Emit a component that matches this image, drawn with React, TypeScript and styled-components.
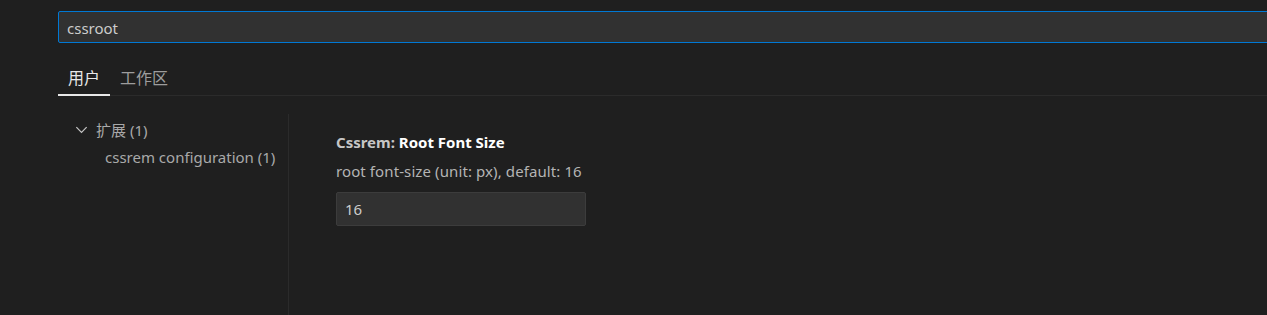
import React from "react";
import styled, { createGlobalStyle } from "styled-components";

const Global = createGlobalStyle`
  html, body { margin: 0; padding: 0; background: #1f1f1f; overflow: hidden; }
  body { font-family: "Noto Sans", "Open Sans", "Noto Sans CJK SC", sans-serif; }
`;

const Page = styled.div`
  width: 1267px;
  height: 315px;
  background: #1f1f1f;
  display: flex;
  flex-direction: column;
  padding-left: 58px;
  box-sizing: border-box;
  overflow: hidden;
`;

const SearchBox = styled.div`
  margin-top: 11px;
  height: 32px;
  width: 1230px;
  box-sizing: border-box;
  border: 1px solid #0078d4;
  border-radius: 2px;
  background: #313131;
  display: flex;
  align-items: center;
  padding: 1px 0 0 8px;
  color: #cccccc;
  font-size: 15px;
`;

const Tabs = styled.div`
  margin-top: 18px;
  display: flex;
  border-bottom: 1px solid #2b2b2b;
`;

const Tab = styled.div<{ $active?: boolean }>`
  padding: 0 10px 2px;
  height: 31px;
  display: flex;
  align-items: center;
  font-size: 16px;
  font-family: "Noto Sans CJK SC", sans-serif;
  color: ${(p) => (p.$active ? "#e7e7e7" : "#9d9d9d")};
  border-bottom: 2px solid ${(p) => (p.$active ? "#e7e7e7" : "transparent")};
  margin-bottom: -1px;
`;

const Body = styled.div`
  display: flex;
  flex: 1;
  margin-top: 18px;
`;

const Toc = styled.div`
  width: 230px;
  border-right: 1px solid #2b2b2b;
  display: flex;
  flex-direction: column;
  padding-top: 1px;
`;

const TocRow = styled.div<{ $indent: number }>`
  height: 28px;
  display: flex;
  align-items: center;
  padding-left: ${(p) => p.$indent}px;
  font-size: 15px;
  color: #a9a9a9;
  gap: 7px;
  white-space: nowrap;
`;

const Cjk = styled.span`
  font-family: "Noto Sans CJK SC", sans-serif;
`;

const Setting = styled.div`
  padding-left: 47px;
  padding-top: 17px;
  display: flex;
  flex-direction: column;
`;

const Title = styled.div`
  font-size: 15px;
  font-weight: 700;
  color: #c6c6c6;
  height: 22px;
  line-height: 22px;
`;

const TitleStrong = styled.span`
  color: #ffffff;
`;

const Desc = styled.div`
  margin-top: 8px;
  font-size: 15px;
  color: #b4b4b4;
  line-height: 20px;
  letter-spacing: 0.1px;
`;

const Input = styled.div`
  margin-top: 11px;
  width: 250px;
  height: 34px;
  box-sizing: border-box;
  border: 1px solid #3c3c3c;
  border-radius: 2px;
  background: #313131;
  display: flex;
  align-items: center;
  padding-left: 8px;
  font-size: 15px;
  color: #cccccc;
`;

const Chevron = () => (
  <svg width="15" height="15" viewBox="0 0 16 16" fill="none">
    <path d="M2.5 5.5 L8 11 L13.5 5.5" stroke="#c5c5c5" strokeWidth="1.3" />
  </svg>
);

export default function App() {
  return (
    <>
      <Global />
      <Page>
        <SearchBox>cssroot</SearchBox>
        <Tabs>
          <Tab $active>用户</Tab>
          <Tab>工作区</Tab>
        </Tabs>
        <Body>
          <Toc>
            <TocRow $indent={16}>
              <Chevron />
              <span>
                <Cjk>扩展</Cjk> (1)
              </span>
            </TocRow>
            <TocRow $indent={47}>cssrem configuration (1)</TocRow>
          </Toc>
          <Setting>
            <Title>
              Cssrem: <TitleStrong>Root Font Size</TitleStrong>
            </Title>
            <Desc>root font-size (unit: px), default: 16</Desc>
            <Input>16</Input>
          </Setting>
        </Body>
      </Page>
    </>
  );
}
